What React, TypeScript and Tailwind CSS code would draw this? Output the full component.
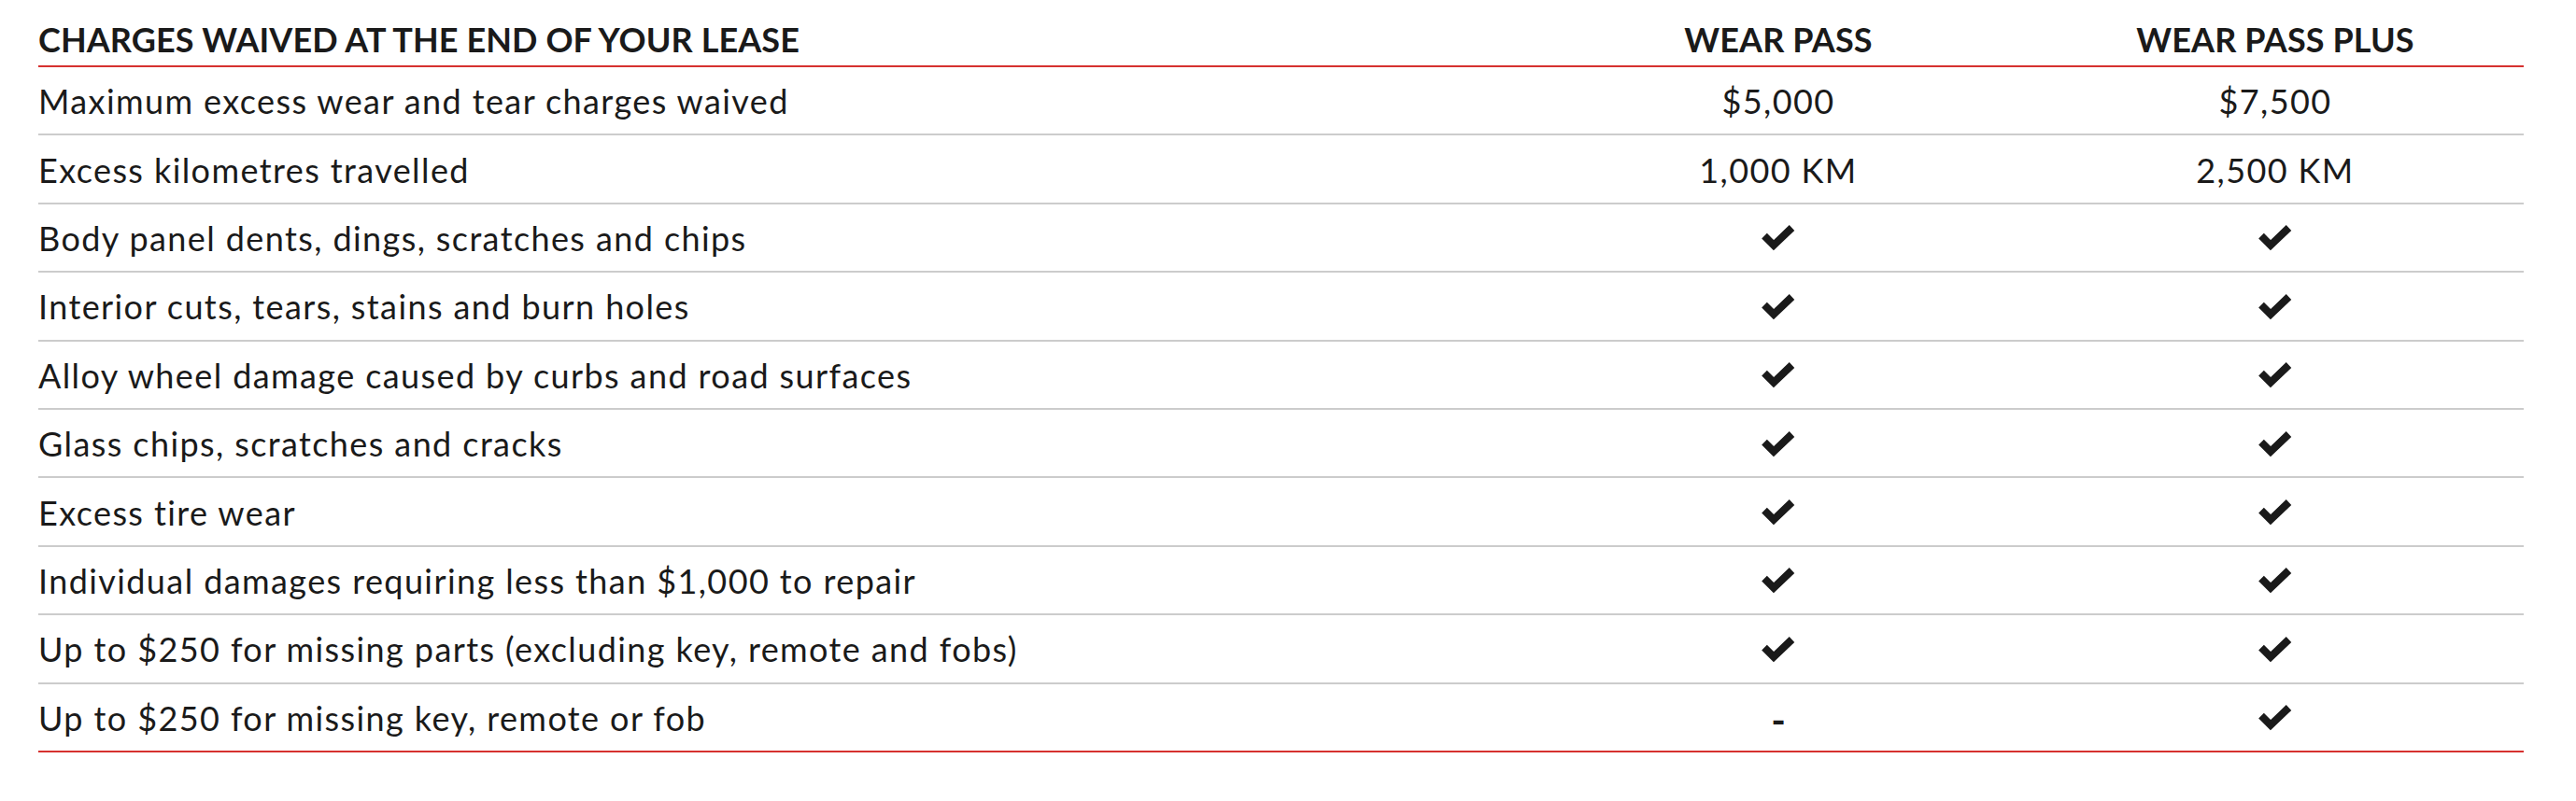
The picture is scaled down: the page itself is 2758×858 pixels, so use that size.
import React from 'react';

type Cell = string | boolean;

const rows: { label: string; pass: Cell; plus: Cell }[] = [
  { label: 'Maximum excess wear and tear charges waived', pass: '$5,000', plus: '$7,500' },
  { label: 'Excess kilometres travelled', pass: '1,000 KM', plus: '2,500 KM' },
  { label: 'Body panel dents, dings, scratches and chips', pass: true, plus: true },
  { label: 'Interior cuts, tears, stains and burn holes', pass: true, plus: true },
  { label: 'Alloy wheel damage caused by curbs and road surfaces', pass: true, plus: true },
  { label: 'Glass chips, scratches and cracks', pass: true, plus: true },
  { label: 'Excess tire wear', pass: true, plus: true },
  { label: 'Individual damages requiring less than $1,000 to repair', pass: true, plus: true },
  { label: 'Up to $250 for missing parts (excluding key, remote and fobs)', pass: true, plus: true },
  { label: 'Up to $250 for missing key, remote or fob', pass: false, plus: true },
];

function Check() {
  return (
    <svg width="36" height="30" viewBox="0 0 36 30" className="block">
      <polyline
        points="3,12.7 13,22.7 32.5,4"
        fill="none"
        stroke="#1a1a1a"
        strokeWidth="8"
        strokeLinejoin="miter"
        strokeLinecap="butt"
      />
    </svg>
  );
}

function Value({ v }: { v: Cell }) {
  if (v === true) return <Check />;
  if (v === false) return <span className="font-bold text-[42px] tracking-normal pt-[4px]">-</span>;
  return <span>{v}</span>;
}

export default function App() {
  return (
    <div className="bg-white w-[2758px] h-[858px] font-['Lato','Liberation_Sans',sans-serif] text-[#1a1a1a]">
      <div className="ml-[41px] w-[2661px]">
        {/* Шапка таблицы */}
        <div className="grid grid-cols-[1fr_532px_532px] h-[72px] border-b-2 border-[#d6312f] items-end pb-[6px] text-[36px] font-bold leading-[43px] tracking-[0.1px]">
          <div>CHARGES WAIVED AT THE END OF YOUR LEASE</div>
          <div className="text-center">WEAR PASS</div>
          <div className="text-center">WEAR PASS PLUS</div>
        </div>

        {/* Строки */}
        {rows.map((r, i) => (
          <div
            key={r.label}
            className={
              'grid grid-cols-[1fr_532px_532px] h-[73.4px] items-center text-[36px] leading-[43px] tracking-[1.4px] pt-[2px] border-b-2 ' +
              (i === rows.length - 1 ? 'border-[#d6312f]' : 'border-[#cccccc]')
            }
          >
            <div>{r.label}</div>
            <div className="flex justify-center">
              <Value v={r.pass} />
            </div>
            <div className="flex justify-center">
              <Value v={r.plus} />
            </div>
          </div>
        ))}
      </div>
    </div>
  );
}
